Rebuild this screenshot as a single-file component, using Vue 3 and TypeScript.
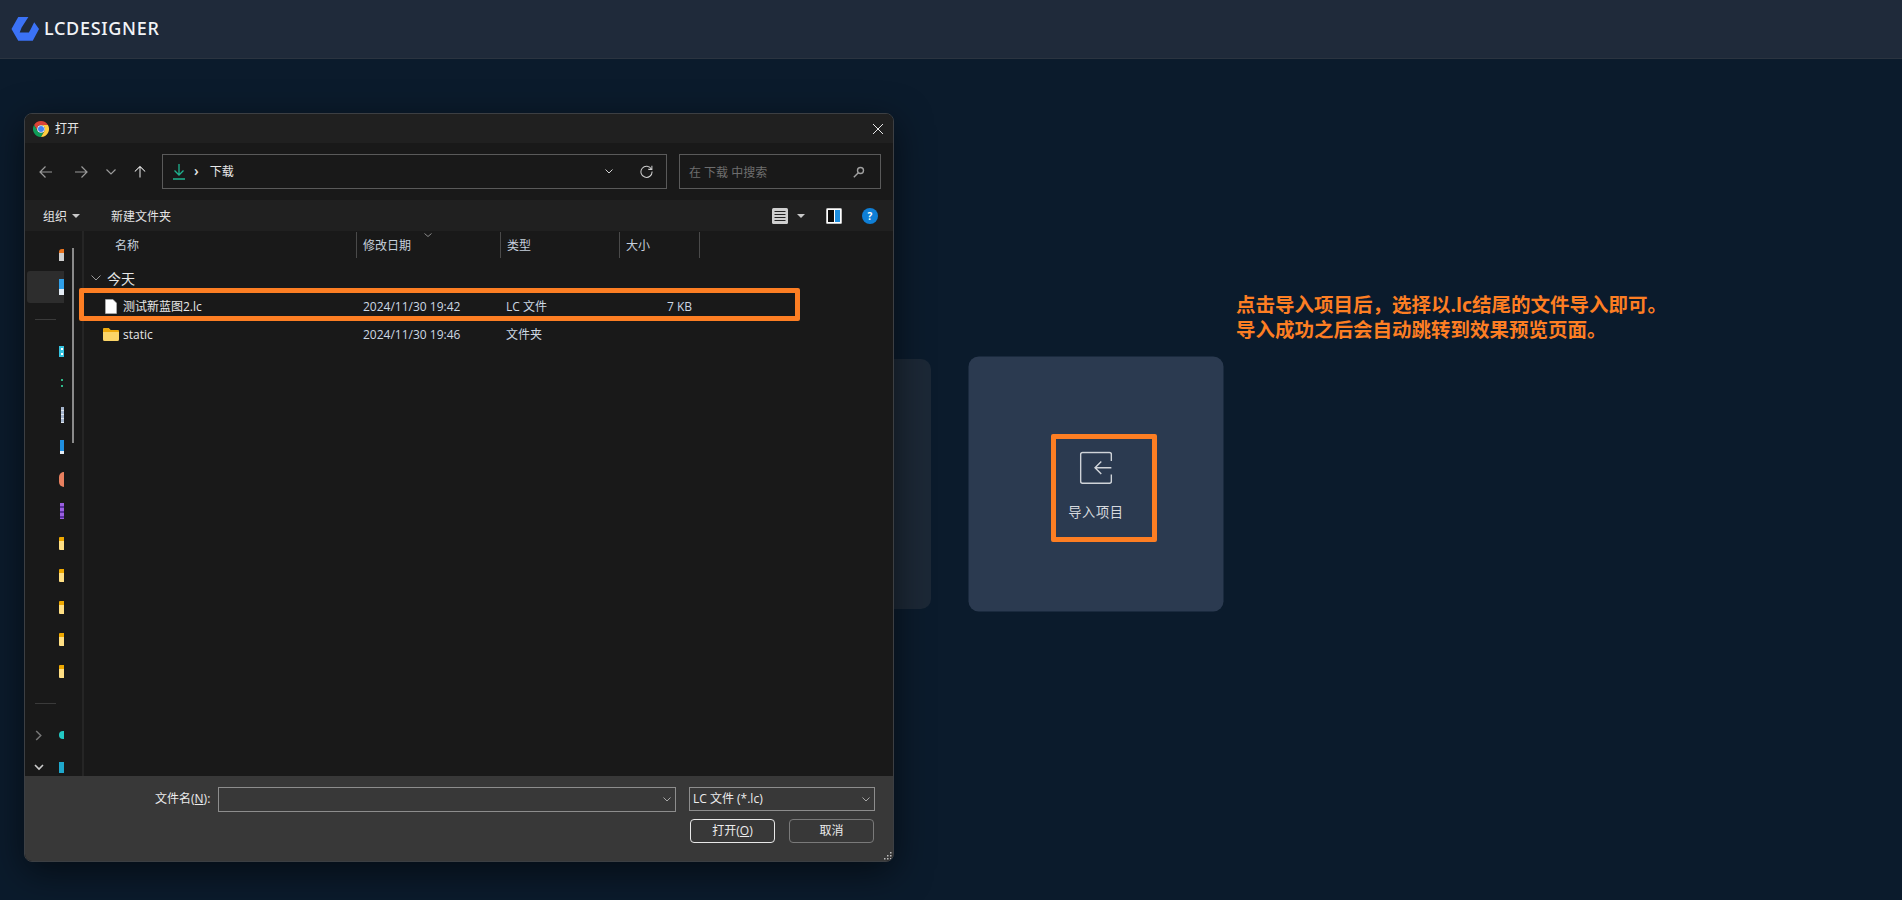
<script setup lang="ts">
interface FileRow { name: string; date: string; type: string; size: string; kind: 'file' | 'folder' }
const files: FileRow[] = [
  { name: '测试新蓝图2.lc', date: '2024/11/30 19:42', type: 'LC 文件', size: '7 KB', kind: 'file' },
  { name: 'static', date: '2024/11/30 19:46', type: '文件夹', size: '', kind: 'folder' },
]
const columns = ['修改日期', '类型', '大小']
const navRows = ['home', 'sel', 'sep', 'a', 'g', 'b', 'c', 'o', 'p', 'y', 'y', 'y', 'y', 'y', 'sep', 't', 'm']
</script>

<template>
  <div class="page">
    <header class="topbar">
      <svg class="logo" viewBox="0 0 30 26" width="29" height="26">
        <path fill="#3b72f6" d="M7.500 0.600H18L11 11.500 9 16.500H18.500L20.500 13 24 6 29 13 22.500 25.200H7.500L0.500 13Z" />
      </svg>
      <span class="brand">LCDESIGNER</span>
    </header>

    <main class="stage">
      <div class="card"></div>
      <div class="card card-active">
        <svg class="import-icon" viewBox="0 0 34 34" width="32" height="32" fill="none" stroke="#cfd3d8" stroke-width="1.500">
          <path d="M33 10V3.200a2 2 0 0 0-2-2H3a2 2 0 0 0-2 2v28a2 2 0 0 0 2 2h28a2 2 0 0 0 2-2V24" />
          <path d="M33 17H16M22.500 10.500 16 17l6.500 6.500" />
        </svg>
        <span class="card-label">导入项目</span>
      </div>
    </main>

    <div class="dialog">
      <div class="titlebar">
        <svg class="chrome" viewBox="0 0 16 16" width="16" height="16">
          <path fill="#db4437" d="M8 0A8 8 0 0 1 14.930 4H8A4 4 0 0 0 4.540 10L1.070 4A8 8 0 0 1 8 0Z" />
          <path fill="#0f9d58" d="M1.070 4 4.540 10A4 4 0 0 0 11.460 10L8 16A8 8 0 0 1 1.070 4Z" />
          <path fill="#ffcd40" d="M14.930 4A8 8 0 0 1 8 16L11.460 10A4 4 0 0 0 8 4Z" />
          <circle cx="8" cy="8" r="3.800" fill="#fff" />
          <circle cx="8" cy="8" r="3" fill="#4285f4" />
        </svg>
        <span class="title">打开</span>
        <svg class="close" viewBox="0 0 10 10" width="10" height="10" stroke="#e6e6e6" stroke-width="1" fill="none"><path d="M0 0 10 10M10 0 0 10" /></svg>
      </div>

      <div class="navbar">
        <svg class="nb" viewBox="0 0 14 14" width="14" height="14" fill="none" stroke="#9a9a9a" stroke-width="1.200"><path d="M13 7H1M6.500 1.500 1 7l5.500 5.500" /></svg>
        <svg class="nb nb-fwd" viewBox="0 0 14 14" width="14" height="14" fill="none" stroke="#9a9a9a" stroke-width="1.200"><path d="M1 7h12M7.500 1.500 13 7l-5.500 5.500" /></svg>
        <svg class="nb nb-down" viewBox="0 0 10 6" width="10" height="6" fill="none" stroke="#9a9a9a" stroke-width="1.200"><path d="M.5.5 5 5 9.500.5" /></svg>
        <svg class="nb nb-up" viewBox="0 0 14 14" width="12" height="13" fill="none" stroke="#e6e6e6" stroke-width="1.200"><path d="M7 14V1M1 7l6-6 6 6" /></svg>
        <div class="addr">
          <svg viewBox="0 0 12 16" width="12" height="16" fill="none" stroke="#1fb28f" stroke-width="1.300"><path d="M6 0v11M1.500 6.500 6 11l4.500-4.500M0 15h12" /></svg>
          <span class="crumb-sep">›</span>
          <span class="crumb">下载</span>
          <svg class="addr-chev" viewBox="0 0 8 5" width="8" height="5" fill="none" stroke="#d0d0d0" stroke-width="1"><path d="M.5.500 4 4 7.500.5" /></svg>
          <svg class="addr-ref" viewBox="0 0 14 14" width="13" height="13" fill="none" stroke="#cfcfcf" stroke-width="1.100"><path d="M12.300 4.500A6 6 0 1 0 13 7" /><path d="M12.800 .8V4.700H8.900" /></svg>
        </div>
        <div class="search">
          <span>在 下载 中搜索</span>
          <svg viewBox="0 0 12 12" width="12" height="12" fill="none" stroke="#a0a0a0" stroke-width="1.400"><circle cx="7.500" cy="4.500" r="3" /><path d="M5.300 6.700 .8 11.200" /></svg>
        </div>
      </div>

      <div class="cmdbar">
        <span class="cmd">组织</span>
        <i class="caret"></i>
        <span class="cmd cmd-new">新建文件夹</span>
        <svg class="view" viewBox="0 0 16 16" width="16" height="16"><rect width="16" height="16" rx="1.500" fill="#cfcfcf" /><path d="M2.500 3.500h11M2.500 6.500h11M2.500 9.500h11M2.500 12.500h11" stroke="#222" stroke-width="1" /></svg>
        <i class="caret caret-view"></i>
        <svg class="preview" viewBox="0 0 16 16" width="16" height="16"><rect width="16" height="16" rx="1.500" fill="#c4c4c4" /><rect x="1" y="1" width="14" height="14" fill="#fff" /><rect x="2" y="2" width="6" height="12" fill="#0c0c0c" /><rect x="9" y="2" width="5" height="12" fill="#1e8fe0" /></svg>
        <span class="help">?</span>
      </div>

      <div class="body">
        <aside class="nav">
          <div class="nav-list">
            <div v-for="(r, i) in navRows" :key="i" class="nav-row" :class="{ selected: r === 'sel' }">
              <hr v-if="r === 'sep'" class="nav-sep" />
              <template v-else>
                <svg v-if="r === 't'" class="twist" viewBox="0 0 7 12" width="7" height="11" fill="none" stroke="#777" stroke-width="1.600"><path d="M1 1l5 5-5 5" /></svg>
                <svg v-if="r === 'm'" class="twist twist-d" viewBox="0 0 10 7" width="10" height="7" fill="none" stroke="#ccc" stroke-width="1.600"><path d="M1 1l4 4 4-4" /></svg>
                <span class="nav-icon" :class="'ni-' + r"></span>
              </template>
            </div>
          </div>
          <i class="nav-scroll"></i>
        </aside>

        <section class="list">
          <div class="cols">
            <span class="col col-name">名称</span>
            <span v-for="c in columns" :key="c" class="col">{{ c }}</span>
            <svg class="sort" viewBox="0 0 8 4" width="8" height="4" fill="none" stroke="#8a8a8a" stroke-width="1"><path d="M.5.500 4 3.500 7.500.5" /></svg>
          </div>
          <div class="group">
            <svg viewBox="0 0 10 6" width="10" height="6" fill="none" stroke="#9a9a9a" stroke-width="1"><path d="M.5.5 5 5 9.500.5" /></svg>
            <span>今天</span>
          </div>
          <div v-for="f in files" :key="f.name" class="row">
            <div class="cell-name">
              <svg v-if="f.kind === 'file'" class="ficon" viewBox="0 0 12 15" width="12" height="15"><path d="M.5.500h7.500l3.500 3.500v10.500H.500Z" fill="#fff" stroke="#bbb" stroke-width=".6" /></svg>
              <svg v-else class="ficon folder" viewBox="0 0 16 13" width="16" height="13"><path d="M0 1.500A1.500 1.500 0 0 1 1.500 0h4l2 2h7A1.500 1.500 0 0 1 16 3.500V11.500A1.500 1.500 0 0 1 14.500 13h-13A1.500 1.500 0 0 1 0 11.500Z" fill="#fbd568" /><path d="M0 1.500A1.500 1.500 0 0 1 1.500 0h4l2 2h7A1.500 1.500 0 0 1 16 3.500V4H0Z" fill="#eda90c" /></svg>
              <span>{{ f.name }}</span>
            </div>
            <span>{{ f.date }}</span>
            <span>{{ f.type }}</span>
            <span class="size">{{ f.size }}</span>
          </div>
        </section>
      </div>

      <div class="footer">
        <div class="footer-inner">
          <div class="footer-row">
            <span class="fname-label">文件名(<u>N</u>):</span>
            <div class="fname"><svg viewBox="0 0 8 5" width="8" height="5" fill="none" stroke="#a8a8a8" stroke-width="1"><path d="M.5.500 4 4 7.500.5" /></svg></div>
            <div class="ftype"><span>LC 文件 (*.lc)</span><svg viewBox="0 0 8 5" width="8" height="5" fill="none" stroke="#a8a8a8" stroke-width="1"><path d="M.5.500 4 4 7.500.5" /></svg></div>
          </div>
          <div class="footer-btns">
            <span class="btn btn-primary">打开(<u>O</u>)</span>
            <span class="btn">取消</span>
          </div>
        </div>
        <svg class="grip" viewBox="0 0 9 9" width="9" height="9" fill="#bdbdbd"><rect x="7" y="1" width="1.500" height="1.500" /><rect x="4" y="4" width="1.500" height="1.500" /><rect x="7" y="4" width="1.500" height="1.500" /><rect x="1" y="7" width="1.500" height="1.500" /><rect x="4" y="7" width="1.500" height="1.500" /><rect x="7" y="7" width="1.500" height="1.500" /></svg>
      </div>
    </div>

    <div class="mark mark-row"></div>
    <div class="mark mark-card"></div>
    <p class="note">点击导入项目后，选择以.lc结尾的文件导入即可。<br />导入成功之后会自动跳转到效果预览页面。</p>
  </div>
</template>

<style>
html, body { margin: 0; background: #0b1b2c; }
</style>

<style scoped>
.page {
  position: relative;
  width: 1902px;
  height: 900px;
  overflow: hidden;
  display: flex;
  flex-direction: column;
  background: #0b1b2c;
  font-family: "Open Sans", "Noto Sans CJK SC", sans-serif;
}
.topbar {
  height: 58px;
  flex: none;
  display: flex;
  align-items: center;
  gap: 4px;
  padding-left: 11px;
  background: #1f2a3a;
  border-bottom: 1px solid #2b3440;
}
.logo { margin-top: -1px; }
.brand {
  color: #f2f4f7;
  font-family: "Noto Sans", sans-serif;
  font-size: 18px;
  font-weight: 500;
  letter-spacing: 0.7px;
  margin-top: -3px;
}
.stage {
  flex: 1;
  display: flex;
  justify-content: center;
  align-items: center;
  gap: 40px;
  padding-top: 9px;
}
.card {
  width: 250px;
  height: 250px;
  border-radius: 10px;
  background: #1c2836;
  display: flex;
  flex-direction: column;
  align-items: center;
  box-sizing: border-box;
}
.card-active {
  background: #2b3a50;
  transform: scale(1.02);
  padding-top: 93px;
}
.card-label {
  margin-top: 18px;
  color: #d6d9de;
  font-size: 13px;
  line-height: 18px;
  letter-spacing: 0.6px;
}

/* The file dialog is a window lying over the page */
.dialog {
  position: absolute;
  left: 24px;
  top: 113px;
  width: 870px;
  height: 749px;
  box-sizing: border-box;
  display: flex;
  flex-direction: column;
  border: 1px solid #3c3f43;
  border-radius: 8px;
  overflow: hidden;
  background: #191919;
  color: #e8e8e8;
  font-size: 12px;
  box-shadow: 0 10px 36px rgba(0, 0, 0, 0.55);
}
.titlebar {
  height: 29px;
  flex: none;
  display: flex;
  align-items: center;
  padding: 0 9px 0 8px;
  background: #202020;
}
.title { margin: -2px 0 0 6px; font-size: 12px; }
.close { margin-left: auto; margin-right: 1px; }
.navbar {
  height: 57px;
  flex: none;
  display: flex;
  align-items: center;
  background: #191919;
}
.nb { flex: none; margin-left: 14px; }
.nb-fwd { margin-left: 21px; }
.nb-down { margin-left: 18px; }
.nb-up { margin-left: 18px; }
.addr {
  margin-left: 16px;
  width: 505px;
  height: 35px;
  box-sizing: border-box;
  display: flex;
  align-items: center;
  padding-left: 10px;
  border: 1px solid #5a5a5a;
}
.crumb-sep { margin-left: 9px; font-size: 14px; color: #e8e8e8; font-weight: 600; margin-top: -3px; }
.crumb { margin-left: 11px; margin-top: -1px; }
.addr-chev { margin-left: auto; }
.addr-ref { margin-left: 27px; margin-right: 13px; }
.search {
  margin-left: 12px;
  width: 202px;
  height: 35px;
  box-sizing: border-box;
  display: flex;
  align-items: center;
  justify-content: space-between;
  padding: 0 15px 0 9px;
  border: 1px solid #5a5a5a;
  color: #6e6e6e;
}
.cmdbar {
  height: 31px;
  flex: none;
  display: flex;
  align-items: center;
  padding-left: 18px;
  background: #202020;
}
.cmd { color: #e4e4e4; font-size: 12px; }
.caret {
  width: 0;
  height: 0;
  margin-left: 5px;
  border-left: 4px solid transparent;
  border-right: 4px solid transparent;
  border-top: 4px solid #c8c8c8;
}
.cmd-new { margin-left: 31px; }
.view { margin-left: auto; }
.caret-view { margin-left: 9px; }
.preview { margin-left: 21px; }
.help {
  width: 16px;
  height: 16px;
  margin: 0 15px 0 20px;
  border-radius: 50%;
  background: #0f7fd6;
  color: #fff;
  font-size: 10px;
  font-weight: 700;
  line-height: 16px;
  text-align: center;
}
.body {
  flex: 1;
  display: flex;
  min-height: 0;
}
.nav {
  position: relative;
  width: 59px;
  flex: none;
  box-sizing: border-box;
  padding: 8px 0 0 2px;
  border-right: 2px solid #252525;
  overflow: hidden;
}
.nav-list { width: 37px; overflow: hidden; }
.nav-row {
  position: relative;
  height: 32px;
  display: flex;
  align-items: center;
  justify-content: flex-end;
}
.nav-row.selected { background: #2d2d2d; border-radius: 3px 0 0 3px; }
.nav-sep {
  position: absolute;
  left: 8px;
  width: 21px;
  margin: 0;
  border: 0;
  border-top: 1px solid #3a3a3a;
}
.nav-icon { width: 5px; height: 16px; flex: none; }
.ni-home { height: 12px; background: linear-gradient(#e8731e 30%, #cfcfcf 30%); border-radius: 3px 0 0 0; }
.ni-sel { background: linear-gradient(#2f9fe8 65%, #e4ecf4 65%); }
.ni-a { height: 11px; background: radial-gradient(circle at 60% 28%, #fff 1px, transparent 1.4px), radial-gradient(circle at 60% 72%, #fff 1px, transparent 1.4px), #35c3e0; }
.ni-g { width: 2px; height: 8px; margin-right: 1px; background: linear-gradient(#2fb98a 25%, transparent 25%, transparent 70%, #2fb98a 70%); }
.ni-b { width: 3px; background: repeating-linear-gradient(#a4b4cc 0 3px, #dfe6f0 3px 4px); }
.ni-c { width: 4px; height: 14px; background: linear-gradient(#1f8fe0 75%, #e4ecf4 75%); }
.ni-o { height: 15px; background: #e8805f; border-radius: 8px 0 0 8px; }
.ni-p { width: 4px; background: repeating-linear-gradient(#9a5fe0 0 3px, #5a2fa0 3px 5px); }
.ni-y { height: 13px; background: linear-gradient(#eea800 28%, #ffdf84 28%); border-radius: 1px 0 0 1px; }
.ni-t { height: 8px; background: #22c9c4; border-radius: 4px 0 0 4px; }
.ni-m { height: 11px; background: #1fa8cc; }
.twist { position: absolute; left: 8px; }
.twist-d { left: 7px; }
.nav-scroll {
  position: absolute;
  left: 47px;
  top: 17px;
  width: 2px;
  height: 195px;
  background: #8a8a8a;
}
.list { flex: 1; min-width: 0; }
.cols {
  position: relative;
  height: 30px;
  display: grid;
  grid-template-columns: 273px 144px 119px 80px;
  align-items: start;
}
.col {
  height: 26px;
  margin-top: 1px;
  line-height: 27px;
  box-sizing: border-box;
  padding-left: 6px;
  border-right: 1px solid #4a4a4a;
  color: #c6d0dc;
  font-size: 12px;
}
.col-name { padding-left: 31px; }
.sort { position: absolute; left: 340px; top: 2px; }
.group {
  height: 31px;
  box-sizing: border-box;
  padding: 2px 0 0 7px;
  display: flex;
  align-items: center;
  gap: 6px;
  font-size: 14px;
  color: #e6e6e6;
}
.row {
  height: 28px;
  display: grid;
  grid-template-columns: 273px 143px 119px 73px;
  align-items: center;
  color: #cdd8e4;
  font-size: 12px;
}
.row > span:not(.size) { padding-left: 6px; }
.cell-name {
  display: flex;
  align-items: center;
  padding-left: 21px;
  color: #e8e8e8;
}
.cell-name span { margin-left: 6px; }
.ficon.folder { margin: 0 -2px 0 -2px; }
.size { text-align: right; }
.footer {
  position: relative;
  height: 85px;
  flex: none;
  box-sizing: border-box;
  padding: 11px 0 0 130px;
  background: #383838;
}
.footer-inner { width: 720px; }
.footer-row {
  display: flex;
  align-items: flex-start;
}
.fname-label { width: 63px; flex: none; line-height: 24px; color: #ececec; white-space: nowrap; }
.fname {
  width: 458px;
  flex: none;
  height: 25px;
  box-sizing: border-box;
  display: flex;
  align-items: center;
  justify-content: flex-end;
  padding-right: 4px;
  border: 1px solid #8d8d8d;
}
.ftype {
  margin-left: 13px;
  width: 186px;
  flex: none;
  height: 24px;
  box-sizing: border-box;
  display: flex;
  align-items: center;
  justify-content: space-between;
  padding: 0 4px 0 3px;
  border: 1px solid #8d8d8d;
  color: #ececec;
  line-height: 22px;
}
.footer-btns {
  display: flex;
  justify-content: flex-end;
  gap: 14px;
  margin-top: 7px;
  padding-right: 1px;
}
.btn {
  width: 85px;
  height: 24px;
  box-sizing: border-box;
  border: 1px solid #7a7a7a;
  border-radius: 4px;
  text-align: center;
  line-height: 21px;
  color: #ececec;
}
.btn-primary { border-color: #e8e8e8; }
.grip { position: absolute; right: 1px; bottom: 1px; }

.mark {
  position: absolute;
  box-sizing: border-box;
  border: 5px solid #fd7e23;
  border-radius: 2px;
}
.mark-row { left: 79px; top: 288px; width: 721px; height: 33px; }
.mark-card { left: 1051px; top: 434px; width: 106px; height: 108px; }
.note {
  position: absolute;
  left: 1236px;
  top: 292px;
  margin: 0;
  color: #fd7e23;
  font-size: 19.5px;
  font-weight: 700;
  line-height: 25px;
  white-space: nowrap;
}
</style>
